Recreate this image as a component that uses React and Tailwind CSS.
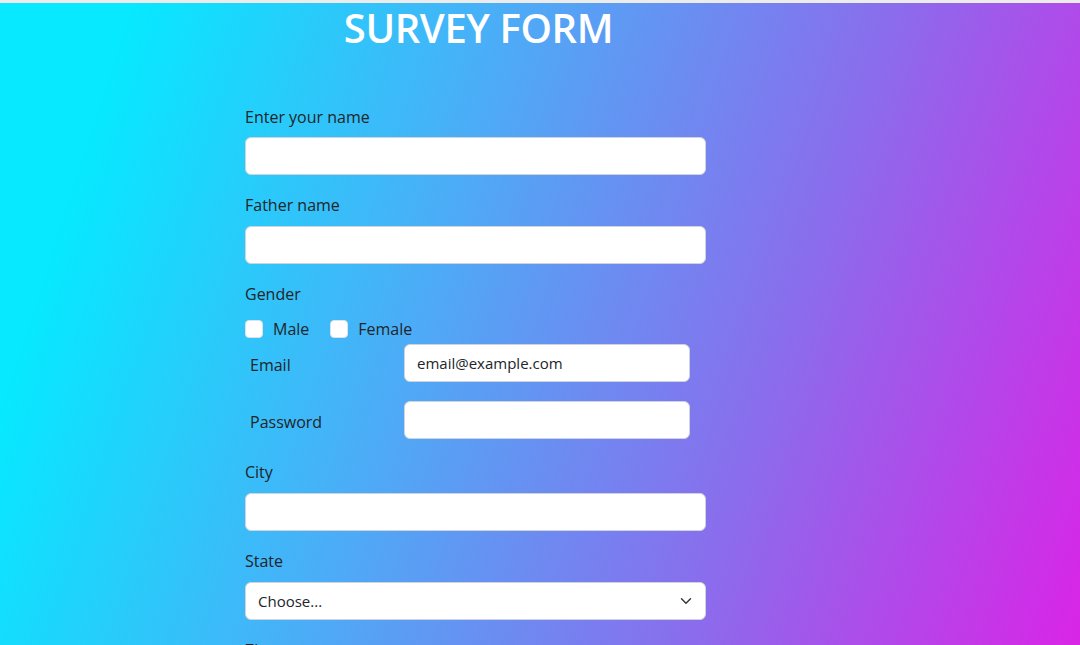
import React from 'react';

const Label = ({ children, className = '' }) => (
  <label className={`block text-[16px] leading-6 text-[#212529] ${className}`}>{children}</label>
);

const Field = ({ className = '', ...props }) => (
  <input
    className={`block h-[38px] w-full rounded-[6px] border border-[#ced4da] bg-white px-3 text-[15px] text-[#212529] outline-none ${className}`}
    {...props}
  />
);

const App = () => {
  return (
    <div
      className="min-h-[645px] w-full overflow-hidden bg-[linear-gradient(108deg,#06e9ff_10%,#4aaef7_38%,#8b6cec_68%,#e01ee6_100%)]"
      style={{ fontFamily: '"Open Sans", "Noto Sans", sans-serif' }}
    >
      <div className="h-[3px] bg-[#ececec]" />

      <div className="ml-[245px] w-[461px] pb-10">
        {/* Title */}
        <h1 className="ml-[6px] h-[50px] text-center text-[40px] font-semibold leading-[50px] tracking-[-0.4px] text-white">
          SURVEY FORM
        </h1>

        <div className="mt-[52px]">
          <Label className="mb-2">Enter your name</Label>
          <Field type="text" />
        </div>

        <div className="mt-[18px]">
          <Label className="mb-[9px]">Father name</Label>
          <Field type="text" />
        </div>

        <div className="mt-[18px]">
          <Label>Gender</Label>
          <div className="mt-[11px] flex items-center gap-[10px] leading-6">
            <span className="h-[18px] w-[18px] rounded-[4px] border border-[#dee2e6] bg-white" />
            <span className="text-[16px] text-[#212529]">Male</span>
            <span className="ml-[11px] h-[18px] w-[18px] rounded-[4px] border border-[#dee2e6] bg-white" />
            <span className="text-[16px] text-[#212529]">Female</span>
          </div>
        </div>

        {/* Email / Password rows */}
        <div className="mt-[3px] flex w-[445px] items-center">
          <Label className="w-[159px] shrink-0 pl-[5px] pt-[4px]">Email</Label>
          <Field type="email" defaultValue="email@example.com" />
        </div>
        <div className="mt-[19px] flex w-[445px] items-center">
          <Label className="w-[159px] shrink-0 pl-[5px] pt-[4px]">Password</Label>
          <Field type="password" />
        </div>

        <div className="mt-[21px]">
          <Label className="mb-[9px]">City</Label>
          <Field type="text" />
        </div>

        <div className="mt-[18px]">
          <Label className="mb-[9px]">State</Label>
          <div className="relative">
            <select className="block h-[38px] w-full appearance-none rounded-[6px] border border-[#ced4da] bg-white pl-3 pr-9 text-[15px] text-[#212529] outline-none">
              <option>Choose...</option>
            </select>
            <svg
              className="pointer-events-none absolute right-[14px] top-[13px]"
              width="12"
              height="12"
              viewBox="0 0 16 16"
              fill="none"
              stroke="#343a40"
              strokeWidth="2"
              strokeLinecap="round"
              strokeLinejoin="round"
            >
              <path d="M2 5l6 6 6-6" />
            </svg>
          </div>
        </div>

        <div className="mt-[18px]">
          <Label className="mb-2">Zip</Label>
          <Field type="text" />
        </div>
      </div>
    </div>
  );
};

export default App;
